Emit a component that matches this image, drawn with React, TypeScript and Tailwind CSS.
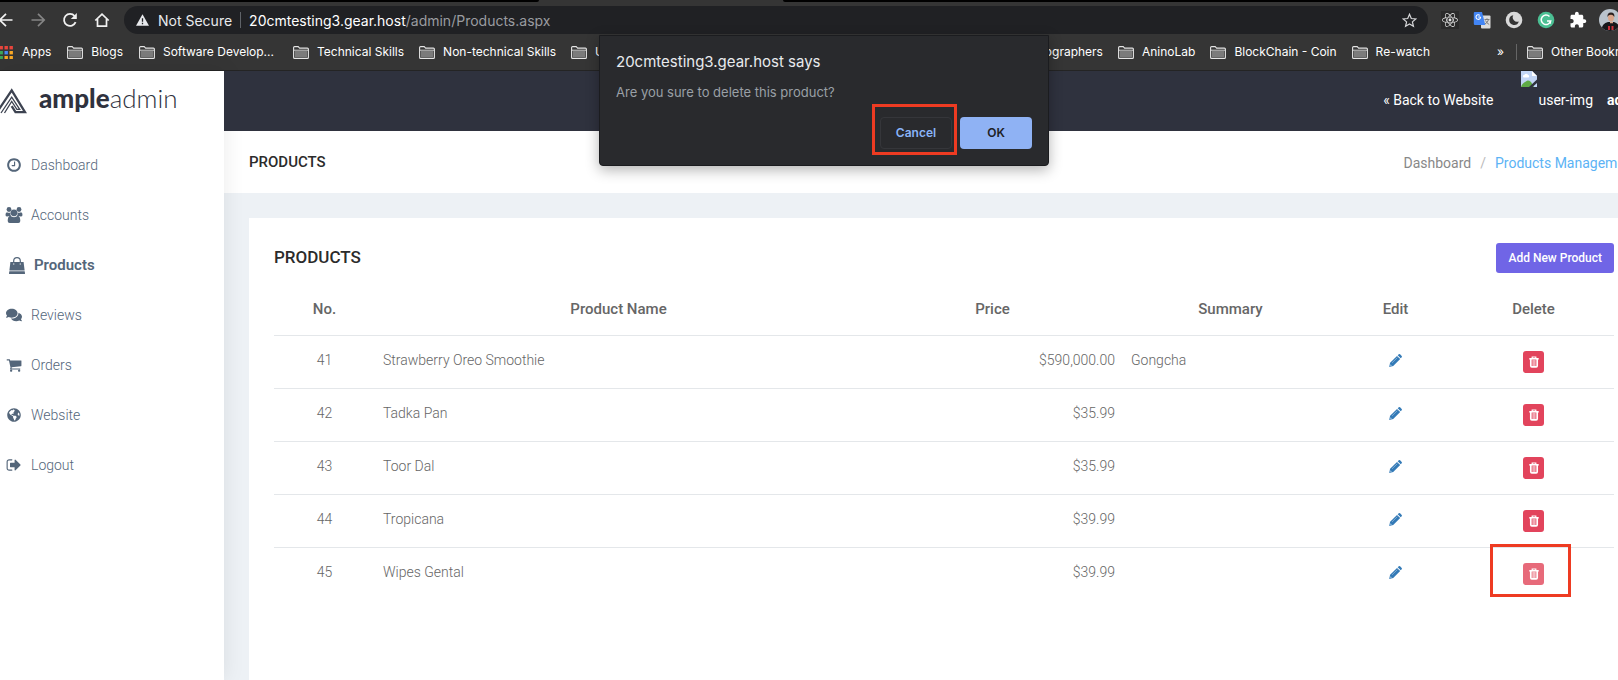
import React from "react";
import { FaComments, FaGlobeAmericas, FaReact } from "react-icons/fa";

type IconProps = { className?: string };

const ClockIcon = () => (
  <svg viewBox="0 0 1792 1792" className="size-4" fill="currentColor">
    <path d="M1024 544v448q0 14-9 23t-23 9h-320q-14 0-23-9t-9-23v-64q0-14 9-23t23-9h224v-352q0-14 9-23t23-9h64q14 0 23 9t9 23zm416 352q0-148-73-273t-198-198-273-73-273 73-198 198-73 273 73 273 198 198 273 73 273-73 198-198 73-273zm224 0q0 209-103 385.5t-279.5 279.5-385.5 103-385.5-103-279.5-279.5-103-385.5 103-385.5 279.5-279.5 385.5-103 385.5 103 279.5 279.5 103 385.5z" />
  </svg>
);

const UsersIcon = () => (
  <svg viewBox="0 0 18 16" className="h-4 w-[18px]" fill="currentColor">
    <circle cx="4" cy="2.5" r="2.4" />
    <circle cx="14" cy="2.5" r="2.4" />
    <path d="M2 5.2q2 1.2 3.6.2Q5 7.500 6 9H4.500Q3 9 2.400 9.600Q.5 9.600.5 8 .5 5.500 2 5.200zM16 5.200q-2 1.200-3.600.2Q13 7.500 12 9h1.500q1.500 0 2.100.6 1.900 0 1.900-1.600 0-2.500-1.500-2.800z" />
    <circle cx="9" cy="5.800" r="3.400" />
    <path d="M5.200 8.800Q7 10.200 9 10.200t3.800-1.400Q15.300 9.400 15.300 14 15.300 16 13.300 16H4.700Q2.700 16 2.700 14 2.700 9.400 5.200 8.800z" />
  </svg>
);

const BagIcon = () => (
  <svg viewBox="0 0 16 17" className="h-[17px] w-4" fill="currentColor">
    <path d="M4.700 7V4a3.300 3.300 0 0 1 6.600 0v3" fill="none" stroke="currentColor" strokeWidth="1.200" />
    <path d="M1.400 5h13.200l1 8.500H.4z" />
    <path d="M.3 14.300h15.400l.3 2.200q0 .5-.5.5H.5q-.5 0-.5-.5z" />
    <circle cx="4.700" cy="7" r=".8" fill="#fff" opacity=".7" />
    <circle cx="11.300" cy="7" r=".8" fill="#fff" opacity=".7" />
  </svg>
);

const CartIcon = () => (
  <svg viewBox="0 0 1792 1792" className="size-4" fill="currentColor">
    <path d="M704 1536q0 52-38 90t-90 38-90-38-38-90 38-90 90-38 90 38 38 90zm896 0q0 52-38 90t-90 38-90-38-38-90 38-90 90-38 90 38 38 90zm128-1088v512q0 24-16.5 42.5t-40.5 21.5l-1044 122q13 60 13 70 0 16-24 64h920q26 0 45 19t19 45-19 45-45 19h-1024q-26 0-45-19t-19-45q0-11 8-31.500t16-36 21.500-40 15.500-29.500l-177-823h-204q-26 0-45-19t-19-45 19-45 45-19h256q16 0 28.500 6.500t19.500 15.500 13 24.500 8 26 5.500 29.500 4.500 26h1201q26 0 45 19t19 45z" />
  </svg>
);

const SignOutIcon = () => (
  <svg viewBox="0 0 1792 1792" className="size-4" fill="currentColor">
    <path d="M704 1440q0 4 1 20t.5 26.500-3 23.500-10 19.500-20.500 6.500h-320q-119 0-203.500-84.500t-84.500-203.500v-704q0-119 84.500-203.500t203.500-84.500h320q13 0 22.500 9.500t9.500 22.500q0 4 1 20t.5 26.500-3 23.500-10 19.500-20.500 6.500h-320q-66 0-113 47t-47 113v704q0 66 47 113t113 47h312l11.500 1 11.500 3 8 5.500 7 9 2 13.500zm928-544q0 26-19 45l-544 544q-19 19-45 19t-45-19-19-45v-288h-448q-26 0-45-19t-19-45v-384q0-26 19-45t45-19h448v-288q0-26 19-45t45-19 45 19l544 544q19 19 19 45z" />
  </svg>
);

const PencilIcon = () => (
  <svg viewBox="0 0 13 13" className="size-[13px]" fill="currentColor">
    <path d="M8 1.900l3.200 3.200-7 6.900L.2 12.900l.9-4.100z" />
    <path d="M8.700 1.300L9.800.3q.7-.5 1.300 0l1.600 1.600q.5.600 0 1.300l-1 1.100z" />
    <path d="M3 8.900l5.300-5.200" stroke="#fff" strokeWidth=".6" opacity=".6" fill="none" />
    <path d="M1.500 10.200l1.400 1.400-1.600.4z" fill="#fff" opacity=".7" />
  </svg>
);

const TrashIcon = () => (
  <svg viewBox="0 0 10 12" className="h-3 w-[10px]" fill="none" stroke="#fff">
    <path d="M3.200 2.200V1h3.600v1.200" strokeWidth="1.200" />
    <path d="M.3 2.800h9.400" strokeWidth="1.600" />
    <path d="M1.800 3v6.800q0 1 1 1h4.400q1 0 1-1V3" strokeWidth="1.700" />
    <path d="M4.100 4v6M5.900 4v6" strokeWidth=".9" />
  </svg>
);

const FolderIcon = ({ className = "" }: IconProps) => (
  <svg viewBox="0 0 16 13" className={`h-[13px] w-4 shrink-0 ${className}`} fill="none">
    <path d="M.6 11.400V1.600q0-1 1-1h3.600l1.400 1.500h7.800q1 0 1 1v8.300q0 1-1 1H1.600q-1 0-1-1z" fill="#353535" stroke="#e4e4e4" strokeWidth="1.100" />
    <path d="M1.800 5h12.400v6.200H1.800z" fill="#7b7b7b" />
    <path d="M1 4.200h14" stroke="#e4e4e4" strokeWidth=".9" />
  </svg>
);

function Bookmark({ label, className = "" }: { label: string; className?: string }) {
  return (
    <a href="#" className={`flex items-center gap-2 ${className}`}>
      <FolderIcon />
      {label}
    </a>
  );
}

const appColors = ["#e8453c", "#e8453c", "#e8453c", "#3aa757", "#4688f1", "#f9a825", "#3aa757", "#f9a825", "#f9a825"];

function BrowserChrome() {
  return (
    <div className="bg-[#353535] font-['Inter',sans-serif] text-white">
      <div className="flex h-[2px]">
        <div className="w-1/3 rounded-br bg-black" />
        <div className="w-[244px]" />
        <div className="flex-1 rounded-bl bg-black" />
      </div>
      <div className="flex h-9 items-center">
        <div className="-ml-[3px] flex shrink-0 gap-[14px]">
          <button aria-label="Back">
            <svg viewBox="0 0 18 18" className="size-[18px]" fill="none" stroke="#f1f1f1" strokeWidth="1.700"><path d="M15.500 9H3M9 2.800L2.800 9 9 15.200" /></svg>
          </button>
          <button aria-label="Forward">
            <svg viewBox="0 0 18 18" className="size-[18px]" fill="none" stroke="#858585" strokeWidth="1.700"><path d="M2.500 9H15M9 2.800L15.200 9 9 15.200" /></svg>
          </button>
          <button aria-label="Reload">
            <svg viewBox="0 0 18 18" className="size-[18px]" fill="none"><path d="M14.600 11.200A6 6 0 1 1 13.600 5" stroke="#f1f1f1" strokeWidth="1.800" /><path d="M15.800 2v6H9.800z" fill="#f1f1f1" /></svg>
          </button>
          <button aria-label="Home">
            <svg viewBox="0 0 18 18" className="size-[18px]" fill="none" stroke="#f1f1f1" strokeWidth="1.700"><path d="M2.300 9.500L9 3.200l6.700 6.300M4.500 8v7.200h9V8" /></svg>
          </button>
        </div>
        <div className="ml-[13px] flex h-7 min-w-0 flex-1 items-center rounded-full bg-[#202124] pr-[11px] pl-3 text-[14px]">
          <svg viewBox="0 0 13 12" className="mr-[9px] h-3 w-[13px] shrink-0"><path d="M6.500.3L13 11.700H0z" fill="#e8eaed" /><path d="M6.500 4.300v3.500M6.500 8.800v1.400" stroke="#202124" strokeWidth="1.300" /></svg>
          <span className="text-[#e8eaed]">Not Secure</span>
          <span className="mx-2 h-4 w-px bg-[#5f6368]" />
          <span className="flex-1 truncate text-[#9a9ca0]">
            <span className="text-white">20cmtesting3.gear.host</span>/admin/Products.aspx
          </span>
          <button aria-label="Bookmark this tab">
            <svg viewBox="0 0 16 16" className="size-[15px]" fill="none" stroke="#d6d7d9" strokeWidth="1.300"><path d="M8 1.400l1.900 4.500 4.900.4-3.700 3.200 1.100 4.700L8 11.700l-4.200 2.500 1.100-4.700L1.200 6.300l4.900-.4z" /></svg>
          </button>
        </div>
        <div className="ml-[13px] flex w-[177px] shrink-0 items-center gap-[14px]">
          <FaReact className="size-[18px] shrink-0 bg-[#2b2b2b] p-px text-[#e4e4e4]" />
          <svg viewBox="0 0 18 18" className="size-[18px] shrink-0">
            <rect x="8" y="4.500" width="9.500" height="13" rx="1" fill="#dcdcdc" />
            <path d="M1 1h8l3.300 13H2q-1.200 0-1.200-1.200V2Q.8 1 1.800 1z" fill="#4285f4" />
            <path d="M7.600 6H5.200M7.600 6a2.300 2.300 0 1 1-.8-1.700" fill="none" stroke="#fff" strokeWidth="1.100" />
            <path d="M11.500 8.500h5M14 7.300v1.200M15.600 8.500q-.8 3-3.600 4.500M12.500 9.500q1.200 2.700 3.700 4" fill="none" stroke="#757575" strokeWidth=".9" />
          </svg>
          <svg viewBox="0 0 18 18" className="size-[18px] shrink-0">
            <circle cx="9" cy="9" r="8.300" fill="#d9d9d9" />
            <path d="M8.300 4.200a4.900 4.900 0 1 0 5.500 6.200A4.400 4.400 0 0 1 8.300 4.200z" fill="#353535" />
          </svg>
          <svg viewBox="0 0 18 18" className="size-[18px] shrink-0">
            <circle cx="9" cy="9" r="8.300" fill="#4bbf93" />
            <path d="M12.500 5.400A4.800 4.800 0 1 0 13.700 10H10M13.300 9.500v3.300" fill="none" stroke="#fff" strokeWidth="1.500" />
          </svg>
          <svg viewBox="0 0 24 24" className="size-[18px] shrink-0" fill="#fff">
            <path d="M20.500 11H19V7c0-1.100-.9-2-2-2h-4V3.500C13 2.120 11.880 1 10.500 1S8 2.120 8 3.500V5H4c-1.100 0-1.990.9-1.990 2v3.800H3.500c1.490 0 2.700 1.210 2.700 2.700s-1.210 2.700-2.700 2.700H2V20c0 1.100.9 2 2 2h3.800v-1.500c0-1.490 1.210-2.700 2.700-2.700 1.490 0 2.700 1.210 2.700 2.700V22H17c1.100 0 2-.9 2-2v-4h1.500c1.380 0 2.500-1.120 2.500-2.500S21.880 11 20.500 11z" />
          </svg>
          <svg viewBox="0 0 22 22" className="-ml-[2px] size-[22px] shrink-0">
            <defs><clipPath id="avatar"><circle cx="11" cy="11" r="11" /></clipPath></defs>
            <g clipPath="url(#avatar)">
              <rect width="22" height="22" fill="#b9c3cc" />
              <path d="M2 22q1-8 7-9l6 0q6 2 7 9z" fill="#17171b" />
              <ellipse cx="12" cy="8.500" rx="3" ry="4" fill="#d9a58a" />
              <path d="M8.500 8q-.5-4.500 3.500-4.500T15.300 8Q14 5.500 12 5.700 9.500 5.500 8.500 8z" fill="#2b211f" />
              <path d="M10 17v4M13.500 17v4" stroke="#c8303a" strokeWidth="2" />
              <path d="M11 13.500h3" stroke="#d9a58a" strokeWidth="1.500" />
            </g>
          </svg>
        </div>
      </div>
      <nav className="flex h-[33px] items-center border-b border-[#242424] pb-1 text-[12px] whitespace-nowrap">
        <a href="#" className="mr-4 flex items-center gap-[9px]">
          <svg viewBox="0 0 13 13" className="size-[13px]">
            {appColors.map((c, i) => (
              <rect key={i} x={(i % 3) * 5 - 0.5} y={Math.floor(i / 3) * 5} width="3.400" height="3.400" fill={c} />
            ))}
          </svg>
          Apps
        </a>
        <Bookmark label="Blogs" className="mr-4" />
        <Bookmark label="Software Develop..." className="mr-[19px]" />
        <Bookmark label="Technical Skills" className="mr-[15px]" />
        <Bookmark label="Non-technical Skills" className="mr-[15px]" />
        <Bookmark label="U" />
        <div className="flex-1" />
        <div className="flex gap-[15px]">
          <a href="#">ographers</a>
          <Bookmark label="AninoLab" />
          <Bookmark label="BlockChain - Coin" />
          <Bookmark label="Re-watch" />
        </div>
        <div className="ml-[67px] flex w-[121px] shrink-0 items-center">
          <button aria-label="More bookmarks" className="w-[19px] shrink-0 text-left">»</button>
          <span className="mr-[10px] h-4 w-px shrink-0 bg-[#666]" />
          <Bookmark label="Other Bookmarks" />
        </div>
      </nav>
    </div>
  );
}

function ConfirmDialog() {
  return (
    <div role="dialog" aria-labelledby="dlg-title" className="absolute top-[35px] left-[599px] z-30 w-[450px] rounded-b border border-[#1b1c1f] bg-[#292a2d] pt-[14px] pr-4 pb-4 pl-4 font-['Inter',sans-serif] shadow-[0_4px_14px_rgba(0,0,0,0.3)]">
      <h2 id="dlg-title" className="text-[15px] leading-6 text-[#e8eaed]">20cmtesting3.gear.host says</h2>
      <p className="mt-2 text-[13px] leading-5 text-[#9aa0a6]">Are you sure to delete this product?</p>
      <div className="mt-[15px] flex justify-end gap-2 text-[12px] font-semibold">
        <div className="relative">
          <button className="h-8 w-[72px] rounded border border-[#35363a] text-[#8ab4f8]">Cancel</button>
          <div className="pointer-events-none absolute -top-[13px] -right-[5px] -bottom-[6px] -left-2 border-3 border-[#ee3b22]" />
        </div>
        <button className="h-8 w-[72px] rounded bg-[#8fb2f4] text-[#202124]">OK</button>
      </div>
    </div>
  );
}

const menu = [
  { label: "Dashboard", icon: <ClockIcon /> },
  { label: "Accounts", icon: <UsersIcon /> },
  { label: "Products", icon: <BagIcon />, active: true },
  { label: "Reviews", icon: <FaComments className="size-4" /> },
  { label: "Orders", icon: <CartIcon /> },
  { label: "Website", icon: <FaGlobeAmericas className="size-[14px]" /> },
  { label: "Logout", icon: <SignOutIcon /> },
];

function Sidebar() {
  return (
    <aside className="relative z-10 w-56 shrink-0 bg-white shadow-[1px_0_20px_rgba(0,0,0,0.08)]">
      <a href="#" className="flex h-[60px] items-center font-['Lato',sans-serif] text-[26px] text-[#2f323e]">
        <svg viewBox="0 0 27 26" className="mr-3 h-[26px] w-[27px]" fill="none" stroke="#3d4351">
          <path d="M-3 24.200L11.700 2.400 25 24.200H15.500L11.700 18.200" strokeWidth="2.300" />
          <path d="M1 25L11.700 9.200l8 12.100h-2.800L11.700 13.400 4.500 25" strokeWidth="1.300" />
        </svg>
        <span className="pb-[5px]"><span className="font-black">ample</span><span className="font-light">admin</span></span>
      </a>
      <ul className="pt-[9px]">
        {menu.map((m) => (
          <li key={m.label}>
            <a href="#" className={`flex h-[50px] items-center gap-2 text-[#54667a] ${m.active ? "pl-2 text-[15px] font-semibold" : "pl-[5px] text-[14px] font-light"}`}>
              <span className="flex w-[18px] justify-center">{m.icon}</span>
              {m.label}
            </a>
          </li>
        ))}
      </ul>
    </aside>
  );
}

const products = [
  { no: 41, name: "Strawberry Oreo Smoothie", price: "$590,000.00", summary: "Gongcha" },
  { no: 42, name: "Tadka Pan", price: "$35.99", summary: "" },
  { no: 43, name: "Toor Dal", price: "$35.99", summary: "" },
  { no: 44, name: "Tropicana", price: "$39.99", summary: "" },
  { no: 45, name: "Wipes Gental", price: "$39.99", summary: "", pressed: true },
];

function ProductTable() {
  return (
    <table className="mt-[10px] w-full table-fixed border-separate border-spacing-0 text-[14px] leading-5 text-[#666]">
      <colgroup>
        <col className="w-[101px]" />
        <col />
        <col className="w-[261px]" />
        <col className="w-[215px]" />
        <col className="w-[115px]" />
        <col className="w-[161px]" />
      </colgroup>
      <thead>
        <tr className="h-[52px] text-[15px]">
          {["No.", "Product Name", "Price", "Summary", "Edit", "Delete"].map((h) => (
            <th key={h} className="font-medium">{h}</th>
          ))}
        </tr>
      </thead>
      <tbody className="font-light">
        {products.map((p) => (
          <tr key={p.no} className="h-[53px] align-top *:border-t *:border-[#e4e7ea] *:px-2 *:pt-[14px]">
            <td className="text-center">{p.no}</td>
            <td>{p.name}</td>
            <td className="text-right">{p.price}</td>
            <td>{p.summary}</td>
            <td>
              <a href="#" aria-label={`Edit ${p.name}`} className="flex h-5 items-center justify-center text-[#337ab7]">
                <PencilIcon />
              </a>
            </td>
            <td>
              <div className="relative mx-auto mt-px w-[21px]">
                <button aria-label={`Delete ${p.name}`} className={`flex h-[22px] w-[21px] items-center justify-center rounded-[3px] ${p.pressed ? "bg-[#e76a7a]" : "bg-[#e2445c]"}`}>
                  <TrashIcon />
                </button>
                {p.pressed && (
                  <div className="pointer-events-none absolute -top-[19px] -right-[27px] -bottom-3 -left-[33px] border-3 border-[#ee3b22]" />
                )}
              </div>
            </td>
          </tr>
        ))}
      </tbody>
    </table>
  );
}

export default function App() {
  return (
    <div className="relative flex min-h-screen flex-col overflow-x-hidden bg-[#edf1f5] font-['Roboto',sans-serif]">
      <BrowserChrome />
      <ConfirmDialog />
      <div className="flex flex-1 bg-[#edf1f5]">
        <Sidebar />
        <div className="flex min-w-0 flex-1 flex-col">
          <header className="relative z-20 flex h-[60px] shrink-0 justify-end bg-[#2f323e] text-[14px] leading-[58px] whitespace-nowrap text-white">
            <a href="#" className="mr-[28px]">« Back to Website</a>
            <div className="mr-[14px] flex gap-px">
              <svg viewBox="0 0 16 16" className="size-4">
                <path d="M0 0h11l5 5v11H0z" fill="#c2d5f5" />
                <path d="M11 0v5h5z" fill="#fff" />
                <path d="M2.500 6.500a1.600 1.600 0 0 1 1-2.800 2 2 0 0 1 3.600.4 1.300 1.300 0 0 1 .4 2.400z" fill="#fff" />
                <path d="M0 16q1-4 5-5.500Q7 8.500 10 11l3 5z" fill="#5fab46" />
                <path d="M8 16l8-7.500V12l-4.500 4z" fill="#2f323e" />
              </svg>
              <span>user-img</span>
            </div>
            <b className="w-[11px]">admin</b>
          </header>
          <div className="flex h-[62px] shrink-0 items-center justify-between bg-white pl-[25px] text-[14px]">
            <h1 className="text-[15px] font-medium text-[#2b2b2b]">PRODUCTS</h1>
            <nav className="flex pt-[2px] whitespace-nowrap">
              <a href="#" className="text-[#888]">Dashboard</a>
              <span className="mx-[9px] text-[#bbb]">/</span>
              <a href="#" className="w-[123px] overflow-hidden text-[#5cb3f5]">Products Management</a>
            </nav>
          </div>
          <section className="mt-[25px] ml-[25px] flex-1 bg-white pt-[25px] pr-1 pl-[25px]">
            <div className="flex items-center justify-between">
              <h2 className="text-[17px] font-medium text-[#2b2b2b]">PRODUCTS</h2>
              <button className="h-[30px] rounded-[3px] bg-[#7065e6] px-3 text-[12px] font-medium text-white">Add New Product</button>
            </div>
            <ProductTable />
          </section>
        </div>
      </div>
    </div>
  );
}
